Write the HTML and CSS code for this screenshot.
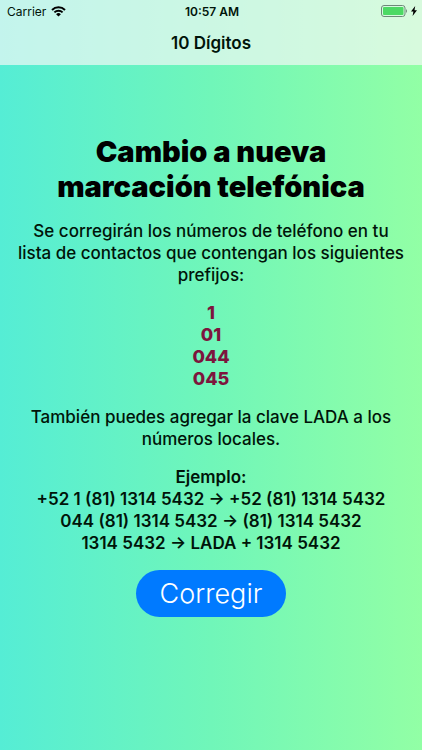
FILE: index.html
```html
<!DOCTYPE html>
<html lang="es">
<head>
    <meta charset="UTF-8">
    <meta name="viewport" content="width=device-width, initial-scale=1.0">
    <title>10 Dígitos</title>
    <link rel="stylesheet" href="styles.css">
</head>
<body>
    <header class="topbar">
        <div class="status">
            <div class="carrier">
                <span>Carrier</span>
                <svg class="wifi" viewBox="0 0 15 11" aria-hidden="true">
                    <path d="M1 4a9.3 9.3 0 0 1 13 0M3.4 6.4a5.9 5.9 0 0 1 8.2 0" fill="none" stroke="#000" stroke-width="2"/>
                    <path d="M7.5 10.6 5.1 8.2a3.5 3.5 0 0 1 4.8 0z"/>
                </svg>
            </div>
            <span class="time">10:57 AM</span>
            <div class="power">
                <svg class="battery" viewBox="0 0 27 12" aria-hidden="true">
                    <rect x=".5" y=".5" width="23.5" height="11" rx="2.5" fill="none" stroke="#6d8878"/>
                    <rect x="2" y="2" width="20.5" height="8" rx="1" fill="#4cd964"/>
                    <path d="M25 4q2 2 0 4z" fill="#6d8878"/>
                </svg>
                <svg class="bolt" viewBox="0 0 6 10" aria-hidden="true">
                    <path d="M4.2 0 0 5.6h2.4L1.6 10 6 4.2H3.5z"/>
                </svg>
            </div>
        </div>
        <div class="nav-title">10 Dígitos</div>
    </header>

    <main class="content">
        <h1 class="title">Cambio a nueva<br>marcación telefónica</h1>
        <p>Se corregirán los números de teléfono en tu<br>lista de contactos que contengan los siguientes<br>prefijos:</p>
        <ul class="prefixes">
            <li>1</li>
            <li>01</li>
            <li>044</li>
            <li>045</li>
        </ul>
        <p>También puedes agregar la clave LADA a los<br>números locales.</p>
        <p class="example">Ejemplo:<br>+52 1 (81) 1314 5432 → +52 (81) 1314 5432<br>044 (81) 1314 5432 → (81) 1314 5432<br>1314 5432 → LADA + 1314 5432</p>
        <button type="button" class="fix-button">Corregir</button>
    </main>
</body>
</html>
```

FILE: styles.css
```css
body {
    font-family: Inter, "Liberation Sans", sans-serif;
    margin: 0;
    min-height: 100vh;
    background: linear-gradient(to right, #55edd5, #70f6b9 50%, #92ffa5);
    color: #001409;
    white-space: nowrap;
}
.topbar {
    height: 65px;
    background: rgba(247,247,247,0.68);
    box-sizing: border-box;
}
.status {
    display: grid;
    grid-template-columns: 1fr auto 1fr;
    align-items: center;
    height: 22px;
    padding: 0 5px 0 7px;
    font-size: 12px;
}
.carrier, .power {
    display: flex;
    align-items: center;
    gap: 5px;
}
.power {
    justify-content: flex-end;
    gap: 3px;
}
.time {
    font-weight: 600;
}
.wifi {
    width: 15px;
    height: 11px;
}
.battery {
    width: 27px;
    height: 12px;
}
.bolt {
    width: 6px;
    height: 10px;
}
.nav-title {
    font-size: 17px;
    font-weight: 600;
    line-height: 43px;
    text-align: center;
}
.content {
    display: flex;
    flex-direction: column;
    align-items: center;
    gap: 16px;
    padding-top: 69px;
    text-align: center;
    font-size: 17px;
    font-weight: 500;
    line-height: 22px;
}
.title {
    margin: 0;
    color: #000;
    font-size: 29px;
    font-weight: 900;
    line-height: 35px;
}
p, ul {
    margin: 0;
    padding: 0;
}
.prefixes {
    list-style: none;
    color: #7d153d;
    font-size: 18px;
    font-weight: 800;
}
.example {
    font-weight: 600;
}
.fix-button {
    padding: 0 24px;
    height: 47px;
    border: 0;
    border-radius: 24px;
    background: #007aff;
    color: #fff;
    font-family: inherit;
    font-size: 27px;
    font-weight: 300;
}
```
